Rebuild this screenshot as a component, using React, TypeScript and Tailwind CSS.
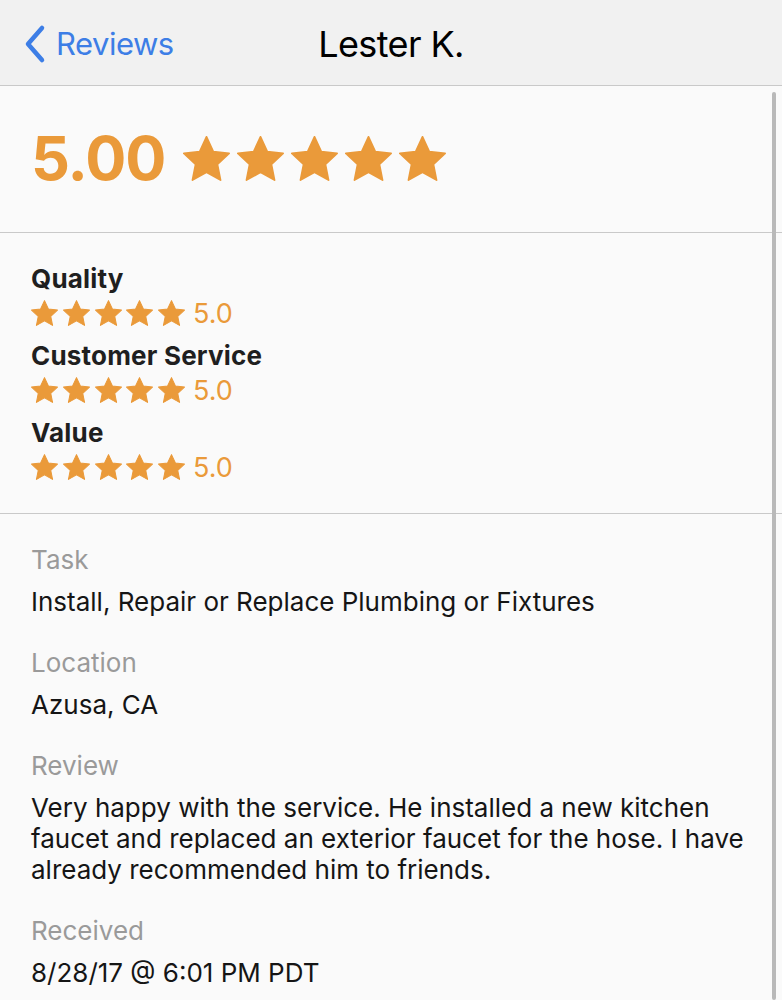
import React from "react";

const ORANGE = "#ea9a3a";

type StarsProps = {
    width: number
    gap: string
};

function Star({ width }: { width: number }) {
    return (
        <svg width={width} height={Math.round(width * 0.955)} viewBox="1.6 1.4 20.8 19.9" className="shrink-0">
            <path
                d="M12 1.8l3 6.5 7 .8-5.2 4.8 1.4 7L12 17.4l-6.2 3.5 1.4-7L2 9.1l7-.8z"
                fill={ORANGE}
                stroke={ORANGE}
                strokeWidth="0.8"
                strokeLinejoin="round"
            />
        </svg>
    );
}

function Stars({ width, gap }: StarsProps) {
    return (
        <div className={`flex items-center ${gap}`}>
            {[0, 1, 2, 3, 4].map((i) => (
                <Star key={i} width={width} />
            ))}
        </div>
    );
}

type RatingRowProps = {
    label: string
    value: string
};

function RatingRow({ label, value }: RatingRowProps) {
    return (
        <div className="flex flex-col">
            <div className="text-[26px] leading-[30px] font-bold text-[#1f1f1f] tracking-[0.2px]">{label}</div>
            <div className="flex items-center gap-[8px] h-[38px]">
                <Stars width={27} gap="gap-[4.75px]" />
                <span className="text-[27px] text-[#ea9a3a] leading-none">{value}</span>
            </div>
        </div>
    );
}

type FieldProps = {
    label: string
    children: React.ReactNode
};

function Field({ label, children }: FieldProps) {
    return (
        <div className="flex flex-col">
            <div className="text-[26px] leading-[31px] text-[#9a9a9a]">{label}</div>
            <div className="text-[26px] leading-[31px] text-[#151515] mt-[11px]">{children}</div>
        </div>
    );
}

export default function App() {
    return (
        <div className="w-[782px] h-[1000px] overflow-hidden bg-[#fafafa] relative" style={{ fontFamily: "Inter, 'Noto Sans', sans-serif" }}>
            {/* nav bar */}
            <div className="h-[86px] bg-[#f1f1f1] border-b border-[#c9c9c9] flex items-center relative pt-[3px]">
                <div className="flex items-center pl-[22px] gap-[8px] text-[#3d7ee6]">
                    <svg width="26" height="40" viewBox="0 0 26 40">
                        <path d="M20 4L6 20l14 16" fill="none" stroke="#3d7ee6" strokeWidth="4.5" strokeLinecap="round" strokeLinejoin="round" />
                    </svg>
                    <span className="text-[31px] tracking-[-0.5px]">Reviews</span>
                </div>
                <div className="absolute left-0 right-0 text-center text-[36px] text-black tracking-[-0.6px] pointer-events-none">
                    Lester K.
                </div>
            </div>

            {/* overall */}
            <div className="h-[147px] border-b border-[#c9c9c9] flex items-center pl-[31px] pb-[2px] gap-[18px]">
                <span className="text-[61px] font-bold text-[#ea9a3a] tracking-[-1px] leading-none">5.00</span>
                <Stars width={47} gap="gap-[7px]" />
            </div>

            {/* breakdown */}
            <div className="h-[281px] border-b border-[#c9c9c9] pl-[31px] pt-[31px] flex flex-col gap-[9px]">
                <RatingRow label="Quality" value="5.0" />
                <RatingRow label="Customer Service" value="5.0" />
                <RatingRow label="Value" value="5.0" />
            </div>

            {/* details */}
            <div className="pl-[31px] pr-[36px] pt-[30px] flex flex-col gap-[30px]">
                <Field label="Task">Install, Repair or Replace Plumbing or Fixtures</Field>
                <Field label="Location">Azusa, CA</Field>
                <Field label="Review">
                    Very happy with the service. He installed a new kitchen faucet and replaced an exterior faucet for the hose. I have already recommended him to friends.
                </Field>
                <Field label="Received">8/28/17 @ 6:01 PM PDT</Field>
            </div>

            {/* scroll indicator */}
            <div className="absolute left-[772px] top-[92px] w-[4px] h-[908px] rounded-full bg-[#b9b9b9]" />
        </div>
    );
}
